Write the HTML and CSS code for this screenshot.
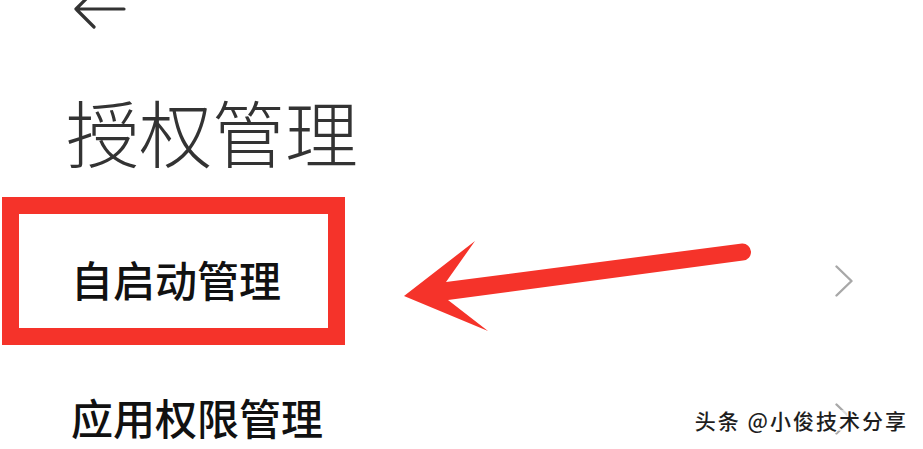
FILE: index.html
```html
<!DOCTYPE html>
<html lang="zh-CN">
<head>
<meta charset="utf-8">
<title>授权管理</title>
<link rel="stylesheet" href="styles.css">
</head>
<body>
<div class="page">
  <header class="topbar">
    <svg class="back" width="60" height="32" viewBox="0 0 60 32">
      <path d="M24 -9 L6 9 L24 27 M6 9 L54 9" fill="none" stroke="#333" stroke-width="3.2" stroke-linecap="round" stroke-linejoin="round"/>
    </svg>
  </header>
  <h1 class="title">授权管理</h1>
  <ul class="list">
    <li class="item">
      <span class="label">自启动管理</span>
      <svg class="chev" width="18" height="32" viewBox="0 0 18 32"><path d="M1.5 1.5 L16.5 16 L1.5 30.5" fill="none" stroke="#a8a8a8" stroke-width="2.4" stroke-linecap="round" stroke-linejoin="round"/></svg>
    </li>
    <li class="item">
      <span class="label">应用权限管理</span>
      <svg class="chev" width="18" height="32" viewBox="0 0 18 32"><path d="M1.5 1.5 L16.5 16 L1.5 30.5" fill="none" stroke="#a8a8a8" stroke-width="2.4" stroke-linecap="round" stroke-linejoin="round"/></svg>
    </li>
  </ul>
  <div class="annot-box"></div>
  <svg class="annot-arrow" width="923" height="449" viewBox="0 0 923 449">
    <path d="M404 296 L475 241 L446 282 L742 243.5 A8.5 8.5 0 0 1 743 260.5 L448 300 L488 331 Z" fill="#f5332a"/>
  </svg>
  <div class="watermark">头条 @小俊技术分享</div>
</div>
</body>
</html>
```
FILE: styles.css
```css
html, body {
  margin: 0;
  padding: 0;
  background: #ffffff;
}
body {
  font-family: "Noto Sans CJK SC", "Noto Sans", sans-serif;
  width: 923px;
  height: 449px;
  overflow: hidden;
}
.page {
  position: relative;
  width: 923px;
  height: 449px;
  overflow: hidden;
}
.topbar {
  height: 40px;
  display: flex;
  align-items: flex-start;
  padding-left: 70px;
}
.back {
  display: block;
  overflow: visible;
}
.title {
  margin: 54px 0 45px 66px;
  font-size: 73px;
  line-height: 73px;
  height: 73px;
  font-weight: 300;
  color: #333333;
  letter-spacing: 0;
}
.list {
  list-style: none;
  margin: 0;
  padding: 0;
}
.item {
  height: 138px;
  display: flex;
  align-items: center;
  justify-content: space-between;
  padding: 0 70px 0 71px;
}
.label {
  font-size: 42px;
  line-height: 42px;
  font-weight: 500;
  color: #111111;
  margin-top: -4px;
}
.chev {
  display: block;
}
.annot-box {
  position: absolute;
  left: 2px;
  top: 197px;
  width: 309px;
  height: 114px;
  border: 17px solid #f5332a;
}
.annot-arrow {
  position: absolute;
  left: 0;
  top: 0;
}
.watermark {
  position: absolute;
  right: 15px;
  top: 410px;
  font-size: 21px;
  line-height: 21px;
  letter-spacing: 2px;
  color: #1e1e1e;
  font-weight: 500;
  background: rgba(255, 255, 255, 0.6);
  text-shadow: 1px 1px 0 #fff, -1px -1px 0 #fff, 1px -1px 0 #fff, -1px 1px 0 #fff;
  white-space: nowrap;
}
```
